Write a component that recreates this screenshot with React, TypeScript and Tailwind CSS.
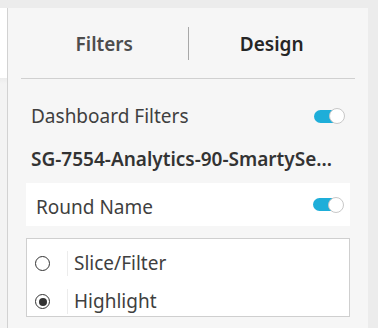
import React, { useState } from 'react';

const Toggle = ({ on }: { on: boolean }) => (
  <div className="relative w-[31px] h-[16px] flex items-center">
    <div className={`w-[29px] h-[13px] rounded-full ${on ? 'bg-[#1eaed9]' : 'bg-[#cfcfcf]'}`} />
    <div
      className={`absolute top-0 w-[16px] h-[16px] rounded-full bg-white border border-[#c8c8c8] ${
        on ? 'right-0' : 'left-0'
      }`}
    />
  </div>
);

const Radio = ({ checked }: { checked: boolean }) => (
  <div className="w-[15px] h-[15px] rounded-full border-[1.5px] border-[#333] flex items-center justify-center">
    {checked && <div className="w-[8px] h-[8px] rounded-full bg-[#333]" />}
  </div>
);

const App = () => {
  const [mode, setMode] = useState<'slice' | 'highlight'>('highlight');

  return (
    <div
      className="w-[378px] h-[328px] bg-[#ececec] flex flex-col overflow-hidden"
      style={{ fontFamily: '"Noto Sans", "Open Sans", sans-serif' }}
    >
      {/* top strip */}
      <div className="h-[8px] shrink-0" />

      <div className="flex flex-1 min-h-0">
        {/* left edge of the main canvas */}
        <div className="w-[7px] flex flex-col bg-[#f3f3f3]">
          <div className="h-[70px] bg-white" />
          <div className="h-[6px] bg-gradient-to-b from-[#ececec] to-[#f3f3f3]" />
        </div>
        <div className="w-px bg-[#d2d2d2]" />

        {/* panel */}
        <div className="w-[360px] bg-[#f6f6f6] flex flex-col">
          <div className="mx-[13px] h-[71px] flex items-center border-b border-[#d0d0d0]">
            <div className="flex-1 text-center text-[19px] font-semibold text-[#4d4d4d] pt-[3px]">Filters</div>
            <div className="w-px h-[33px] bg-[#a8a8a8]" />
            <div className="flex-1 text-center text-[19px] font-semibold text-[#262626] pt-[3px]">Design</div>
          </div>

          <div className="pl-[23px] pr-[23px] mt-[26px] flex items-center justify-between">
            <span className="text-[19px] text-[#3f3f3f] leading-[22px]">Dashboard Filters</span>
            <Toggle on />
          </div>

          <div className="pl-[23px] pr-[26px] mt-[21px] text-[19px] font-semibold text-[#333] whitespace-nowrap leading-[22px]">
            SG-7554-Analytics-90-SmartySe...
          </div>

          <div className="mx-[18px] mt-[13px] h-[43px] bg-white flex items-center justify-between pl-[10px] pr-[6px]">
            <span className="text-[19px] text-[#3f3f3f] pt-[5px]">Round Name</span>
            <Toggle on />
          </div>

          <div className="mx-[18px] mt-[12px] h-[79px] bg-white border border-[#cfcfcf] flex flex-col pt-[12px] gap-[13px]">
            <button className="flex items-center h-[25px]" onClick={() => setMode('slice')}>
              <div className="w-[40px] flex justify-start pl-[8px]">
                <Radio checked={mode === 'slice'} />
              </div>
              <div className="w-px h-[25px] bg-[#ececec]" />
              <span className="pl-[6px] text-[19px] text-[#3f3f3f]">Slice/Filter</span>
            </button>
            <button className="flex items-center h-[25px]" onClick={() => setMode('highlight')}>
              <div className="w-[40px] flex justify-start pl-[8px]">
                <Radio checked={mode === 'highlight'} />
              </div>
              <div className="w-px h-[25px] bg-[#ececec]" />
              <span className="pl-[6px] text-[19px] text-[#3f3f3f]">Highlight</span>
            </button>
          </div>
        </div>
      </div>
    </div>
  );
};

export default App;
